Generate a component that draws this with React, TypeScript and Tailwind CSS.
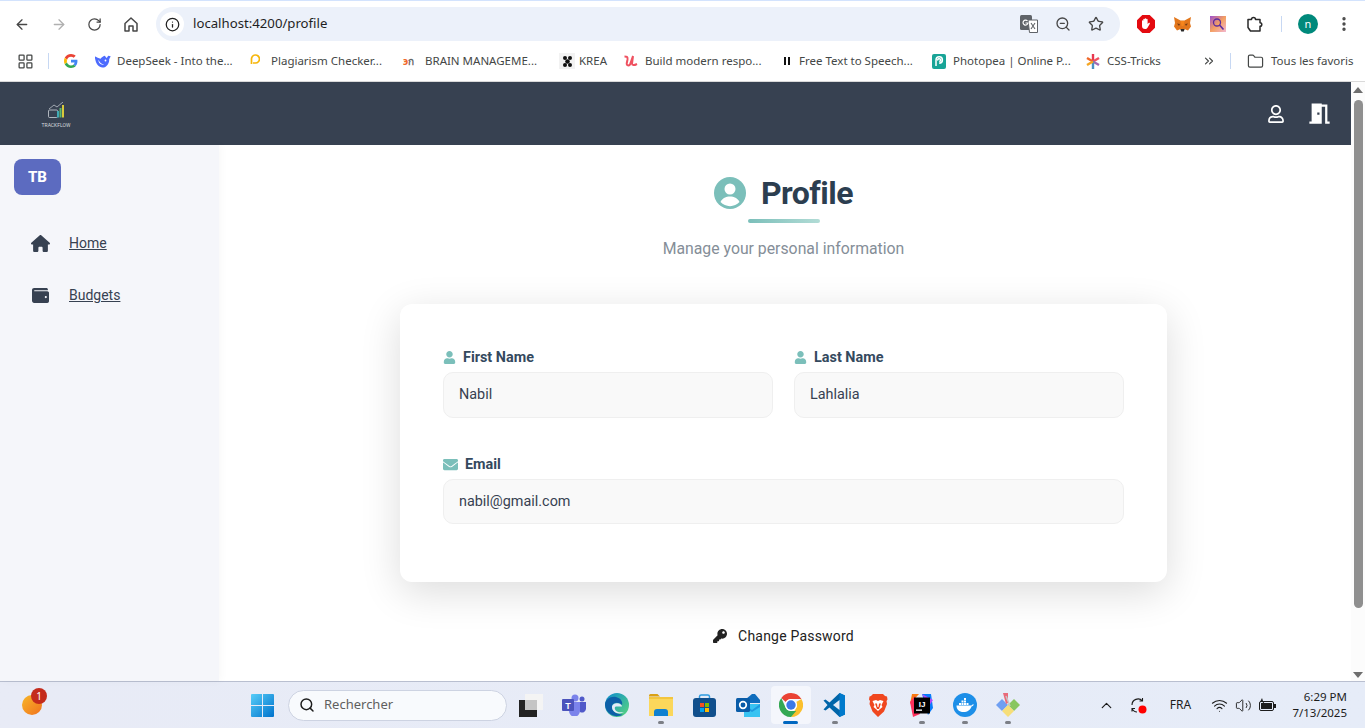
import { ReactNode } from 'react';
import { ArrowLeft, ArrowRight, RotateCw, Info, ZoomOut, Star, LayoutGrid, ChevronsRight, Folder, ChevronUp, Search, EllipsisVertical, Wifi, Volume2 } from 'lucide-react';
import { FaWallet, FaUser, FaEnvelope, FaKey, FaRegUser } from 'react-icons/fa';
import { FaHouse } from 'react-icons/fa6';
import { MdMeetingRoom } from 'react-icons/md';

const GoogleIcon = () => (
  <svg width="14" height="14" viewBox="0 0 48 48">
    <path fill="#EA4335" d="M24 9.500c3.500 0 6.700 1.200 9.200 3.600l6.900-6.900C35.900 2.400 30.500 0 24 0 14.600 0 6.500 5.400 2.600 13.200l8 6.200C12.400 13.700 17.700 9.500 24 9.500z" />
    <path fill="#4285F4" d="M46.100 24.500c0-1.600-.1-3.100-.4-4.500H24v9h12.400c-.5 2.900-2.200 5.300-4.600 7l7.200 5.600c4.200-3.900 7.100-9.700 7.100-17.100z" />
    <path fill="#FBBC05" d="M10.500 28.600c-.5-1.400-.8-3-.8-4.600s.3-3.200.8-4.600l-8-6.200C.9 16.500 0 20.100 0 24s.9 7.500 2.600 10.800l7.900-6.200z" />
    <path fill="#34A853" d="M24 48c6.500 0 11.900-2.100 15.900-5.800l-7.200-5.600c-2.200 1.500-5 2.400-8.700 2.400-6.300 0-11.600-4.200-13.500-9.900l-8 6.200C6.500 42.600 14.600 48 24 48z" />
  </svg>
);

const DeepSeekIcon = () => (
  <svg width="16" height="13" viewBox="0 0 16 13">
    <path fill="#4d6bfe" d="M.3 1.500c1.500 1 3.200 1.700 5.200 2.200C7 2 8.500 1 10 .8c.3 1 .8 1.700 1.700 2.100L13.200.7l2.500.6-1.500 2.900c.2 3.800-2.200 8.300-6.700 8.300-4 0-7.200-4-7.700-11z" />
    <path fill="#fff" d="M3.500 4.800c1 2.800 3 4.300 5.500 4.700-3 .9-5.800-1.500-5.500-4.700z" />
    <circle cx="10.500" cy="5.500" r=".9" fill="#fff" />
  </svg>
);

const PlagiarismIcon = () => (
  <svg width="11" height="14" viewBox="0 0 11 14">
    <path fill="none" stroke="#f6b60b" strokeWidth="1.700" d="M2.500 10V5.500a4 4 0 1 1 4 3.500H4" />
  </svg>
);

const BrainIcon = () => (
  <span className="font-['Noto_Sans',sans-serif] text-[10px] leading-none font-bold tracking-tighter">
    <span className="text-[#f0682a]">э</span>
    <span className="text-[#666]">ก</span>
  </span>
);

const KreaIcon = () => (
  <span className="flex h-4 w-4 items-center justify-center bg-[#f2f2f2]">
    <svg width="9" height="11" viewBox="0 0 9 11" fill="#111">
      <circle cx="2" cy="2" r="2" />
      <circle cx="7" cy="2" r="2" />
      <circle cx="2" cy="9" r="2" />
      <circle cx="7" cy="9" r="2" />
      <circle cx="4.500" cy="5.500" r="2.300" />
    </svg>
  </span>
);

const UdemyIcon = () => (
  <svg width="15" height="12" viewBox="0 0 15 12">
    <path fill="none" stroke="#ef5160" strokeWidth="2" d="M.5 1.500c2 0 3.500 0 3 3l-.8 4c-.3 2 2 2.500 3.300 1l3-8.500-1 7.500c0 2 2 2 5 .5" />
  </svg>
);

const PhotopeaIcon = () => (
  <span className="flex h-[15px] w-[14px] items-center justify-center rounded-[2px] bg-[#18a497]">
    <svg width="10" height="12" viewBox="0 0 10 12">
      <path fill="none" stroke="#fff" strokeWidth="1.500" d="M2 11V5a3.200 3.200 0 1 1 3.200 3.200M3.800 5.500a1.400 1.400 0 1 1 1.400 1" />
    </svg>
  </span>
);

const CssTricksIcon = () => (
  <svg width="14" height="15" viewBox="0 0 14 15" strokeWidth="2.400">
    <path stroke="#f0682a" d="M7 7.500 1 4" />
    <path stroke="#e8384f" d="M7 7.500V0" />
    <path stroke="#ef5160" d="M7 7.500 13 4" />
    <path stroke="#a06ab4" d="M7 7.500 13 11" />
    <path stroke="#4a90c2" d="M7 7.500V15" />
    <path stroke="#f5a623" d="M7 7.500 1 11" />
  </svg>
);

const PauseBarsIcon = () => (
  <svg width="6" height="8" viewBox="0 0 6 8" fill="#111">
    <rect x="0" y="0" width="2" height="8" />
    <rect x="4" y="0" width="2" height="8" />
  </svg>
);

const bookmarks = [
  { label: 'DeepSeek - Into the...', icon: <DeepSeekIcon />, cell: 'w-[154px]', box: 'w-[22px]' },
  { label: 'Plagiarism Checker...', icon: <PlagiarismIcon />, cell: 'w-[154px]', box: 'w-[22px]' },
  { label: 'BRAIN MANAGEME...', icon: <BrainIcon />, cell: 'w-[156px]', box: 'w-[22px]' },
  { label: 'KREA', icon: <KreaIcon />, cell: 'w-[65px]', box: 'w-[20px]' },
  { label: 'Build modern respo...', icon: <UdemyIcon />, cell: 'w-[157px]', box: 'w-[21px]' },
  { label: 'Free Text to Speech...', icon: <PauseBarsIcon />, cell: 'w-[151px]', box: 'w-[18px] pl-[3px]' },
  { label: 'Photopea | Online P...', icon: <PhotopeaIcon />, cell: 'w-[154px]', box: 'w-[21px]' },
  { label: 'CSS-Tricks', icon: <CssTricksIcon />, cell: 'w-[116px]', box: 'w-[21px]' },
];

const TranslateIcon = () => (
  <svg width="18" height="18" viewBox="0 0 18 18">
    <rect x="0" y="0" width="12" height="15" rx="1.500" fill="#5f6368" />
    <path fill="#fff" stroke="#5f6368" d="M8 5h9.500v12.500H9.500z" />
    <path fill="none" stroke="#fff" strokeWidth="1.200" d="M7.500 6A2.500 2.500 0 1 0 8 8H5.500" />
    <path fill="none" stroke="#5f6368" strokeWidth="1.100" d="m11 8 4 6m0-6-4 6" />
  </svg>
);

const AdBlockIcon = () => (
  <svg width="18" height="18" viewBox="0 0 18 18">
    <path fill="#e40a10" d="M5.300 0h7.400L18 5.300v7.400L12.700 18H5.300L0 12.700V5.300z" />
    <path fill="#fff" d="M5 8.500V6c0-1 1.300-1 1.300 0V4.500c0-1 1.400-1 1.400 0V4c0-1 1.500-1 1.500 0v.5c0-1 1.400-1 1.400 0V9l1-1c.8-.7 1.700.1 1.100 1l-2.200 3.700c-.5.800-1.200 1.300-2.300 1.300H8c-2 0-3-1.300-3-3z" />
  </svg>
);

const FoxIcon = () => (
  <svg width="17" height="16" viewBox="0 0 17 16">
    <path fill="#e2761b" d="M0 1l6.500 3.500h4L17 1l-1 6 1 3.500-3 4-3-1.200-2.500 1-2.500-1-3 1.200-3-4L1 7z" />
    <path fill="#763d16" d="M3 7.500l3 .5-1 2zM14 7.500l-3 .5 1 2z" />
    <path fill="#2a2a2a" d="M6.500 13h4l-.7 2.500H7.200z" />
    <path fill="#f6851b" d="M6.500 5h4l-1 5h-2z" />
  </svg>
);

const LensIcon = () => (
  <svg width="16" height="16" viewBox="0 0 16 16">
    <defs>
      <linearGradient id="lensBg" x1="0" y1="0" x2="1" y2="1">
        <stop offset="0" stopColor="#9c4fd0" />
        <stop offset="0.5" stopColor="#f4a062" />
        <stop offset="1" stopColor="#f2b6d0" />
      </linearGradient>
    </defs>
    <rect width="16" height="16" fill="url(#lensBg)" />
    <circle cx="7" cy="6.500" r="3.500" fill="none" stroke="#5a2ca0" strokeWidth="1.300" />
    <path stroke="#5a2ca0" strokeWidth="1.600" d="m9.500 9 4 4.500" />
  </svg>
);

const PuzzleIcon = () => (
  <svg width="16" height="16" viewBox="0 0 16 16" fill="none" stroke="#2a2a2a" strokeWidth="1.500" strokeLinejoin="round">
    <path d="M1 3.500h3.500a2 2 0 0 1 4 0H13v3.200a1.800 1.800 0 0 1 0 3.600V15H3.500l-2.500-3.500z" />
  </svg>
);

const ChromeHomeIcon = () => (
  <svg width="14" height="15" viewBox="0 0 14 15" fill="none" stroke="#474747" strokeWidth="1.500" strokeLinejoin="round">
    <path d="M1 6.500 7 1l6 5.500V14H9V9H5v5H1z" />
  </svg>
);

const WindowsIcon = () => (
  <svg width="23" height="23" viewBox="0 0 23 23">
    <defs>
      <linearGradient id="winBlue" x1="0" y1="0" x2="1" y2="1">
        <stop offset="0" stopColor="#56cdf8" />
        <stop offset="1" stopColor="#0072cc" />
      </linearGradient>
    </defs>
    <path fill="url(#winBlue)" d="M0 1a1 1 0 0 1 1-1h10v11H0zM12 0h10a1 1 0 0 1 1 1v10H12zM0 12h11v11H1a1 1 0 0 1-1-1zM12 12h11v10a1 1 0 0 1-1 1H12z" />
  </svg>
);

const TaskViewIcon = () => (
  <svg width="24" height="23" viewBox="0 0 24 23">
    <rect x="6" y="0" width="18" height="16" fill="#f4f4f4" />
    <rect x="0" y="6" width="18" height="17" fill="#222" />
    <rect x="6" y="6" width="12" height="10" fill="#c4c4c4" />
  </svg>
);

const TeamsIcon = () => (
  <svg width="24" height="22" viewBox="0 0 24 22">
    <circle cx="13" cy="4" r="3.500" fill="#7b83eb" />
    <circle cx="20" cy="5" r="2.500" fill="#5059c9" />
    <path fill="#5059c9" d="M16 8h8v7a4 4 0 0 1-6 3z" />
    <path fill="#7b83eb" d="M7 8h11v9a5 5 0 0 1-11 0z" />
    <rect x="0" y="5" width="12" height="12" rx="1" fill="#4b53bc" />
    <text x="6" y="14.500" textAnchor="middle" fontSize="9" fontWeight="700" fill="#fff" fontFamily="Liberation Sans, sans-serif">T</text>
  </svg>
);

const EdgeIcon = () => (
  <svg width="24" height="24" viewBox="0 0 24 24">
    <defs>
      <linearGradient id="edgeTop" x1="0" y1="0" x2="1" y2="1">
        <stop offset="0" stopColor="#0c8bd0" />
        <stop offset="1" stopColor="#5bd87a" />
      </linearGradient>
    </defs>
    <circle cx="12" cy="12" r="12" fill="url(#edgeTop)" />
    <path fill="#0d5fa8" d="M0 12C0 6 6 3 11 4c4 1 7 4 6 8-3-3-9-3-10 1-1 5 5 9 11 8.500A12 12 0 0 1 0 12z" />
    <path fill="#e4ebf7" d="M7 14c0-3 4-4.500 7-3.500 1.500.5 3 1.500 3 3H11c-1.500 0-2 3 1 5 2 1 4.500 1 7 .5-4 3-12 1-12-5z" />
  </svg>
);

const FolderIcon = () => (
  <svg width="24" height="22" viewBox="0 0 24 22">
    <path fill="#d9a016" d="M0 1.500A1.500 1.500 0 0 1 1.500 0h7L11 2.500H0z" />
    <path fill="#fbd75b" d="M0 4h24v18H0z" />
    <path fill="#f3c53e" d="M0 3h24v2H0z" />
    <path fill="#0f80d0" d="M5 18a3 3 0 0 1 3-3h8a3 3 0 0 1 3 3v4H5z" />
  </svg>
);

const StoreIcon = () => (
  <svg width="23" height="23" viewBox="0 0 23 23">
    <path fill="none" stroke="#2e9be0" strokeWidth="1.500" d="M6.500 5V2.500A1.700 1.700 0 0 1 8.200 1h6.600a1.700 1.700 0 0 1 1.700 1.500V5" />
    <rect y="4" width="23" height="19" rx="3" fill="#114f8c" />
    <rect x="7" y="9" width="4" height="4" fill="#f25022" />
    <rect x="12" y="9" width="4" height="4" fill="#7fba00" />
    <rect x="7" y="14" width="4" height="4" fill="#00a4ef" />
    <rect x="12" y="14" width="4" height="4" fill="#ffb900" />
  </svg>
);

const OutlookIcon = () => (
  <svg width="24" height="23" viewBox="0 0 24 23">
    <path fill="#0f6cbd" d="M10 5l6-5h3l5 6v3H10z" />
    <path fill="#38c3f2" d="M8 10h16v13H8z" />
    <path fill="#1e9ae0" d="M8 10l8 6 8-6v3l-8 5-8-5z" />
    <rect x="0" y="4" width="14" height="14" rx="1.500" fill="#0a5ca8" />
    <circle cx="7" cy="11" r="3.300" fill="none" stroke="#fff" strokeWidth="1.700" />
  </svg>
);

const ChromeLogo = () => (
  <svg width="24" height="24" viewBox="0 0 24 24">
    <path fill="#ea4335" d="M12 0a12 12 0 0 1 10.400 6H12a6 6 0 0 0-5.200 3L2.300 4.900A12 12 0 0 1 12 0z" />
    <path fill="#fbc02d" d="M22.400 6A12 12 0 0 1 12 24l5.200-9a6 6 0 0 0 0-6z" />
    <path fill="#34a853" d="M2.300 4.900 6.800 15a6 6 0 0 0 5.200 3h5.200l-5.200 6A12 12 0 0 1 2.300 4.900z" />
    <circle cx="12" cy="12" r="6" fill="#fff" />
    <circle cx="12" cy="12" r="4.700" fill="#3b78e7" />
  </svg>
);

const VsCodeIcon = () => (
  <svg width="24" height="24" viewBox="0 0 24 24">
    <path fill="#0065a9" d="M23 2.500 17.500 0 7.500 9.500l-4-3L1.500 7.500 5.500 12l-4 4.500 2 1 4-3 10 9.500 5.500-2.500z" />
    <path fill="#007acc" d="M17.500 0 23 2.500v19L17.500 24z" />
    <path fill="#e4ebf7" d="M17.500 7v10L11 12z" />
  </svg>
);

const BraveIcon = () => (
  <svg width="20" height="23" viewBox="0 0 20 23">
    <path fill="#f0471f" d="M5 0h10l2 2 2 .5.500 3-1 1.500.5 3-3 7.500L10 23l-5.500-5.500-3-7.500.5-3-1-1.500.5-3L3 2z" />
    <path fill="#fff" d="M4.500 7 8 6l2 1 2-1 3.500 1-2 4 1 2-3 2.500L10 17l-1.500-1.500-3-2.500 1-2z" />
    <path fill="#f0471f" d="M7 9.500h2L9.500 13H10.500L11 9.500h2L11 15H9z" />
  </svg>
);

const IdeaIcon = () => (
  <svg width="23" height="23" viewBox="0 0 23 23">
    <path fill="#f97a12" d="M2 0h7L0 10z" />
    <path fill="#fe315d" d="M0 8l5-6 5 18-7 3z" />
    <path fill="#087cfa" d="M12 0h9l2 14-5 7z" />
    <path fill="#b74af7" d="M12 0 23 6l-4 6z" />
    <rect x="4" y="3.500" width="16" height="16" fill="#000" />
    <text x="12" y="12.500" textAnchor="middle" fontSize="8" fontWeight="700" fill="#fff" fontFamily="Liberation Sans, sans-serif">IJ</text>
    <rect x="6" y="15.500" width="6" height="1.300" fill="#fff" />
  </svg>
);

const DockerIcon = () => (
  <svg width="24" height="24" viewBox="0 0 24 24">
    <circle cx="12" cy="12" r="12" fill="#1d8fe8" />
    <path fill="#fff" d="M3.500 12.500h14c1 0 1.800-.5 2.300-1.300l1 .4c-.4 1-1.200 1.700-2.300 1.900-1 3.500-4 5.500-8 5.500-4.500 0-7-2.500-7-6.500z" />
    <path fill="#fff" d="M6 10h2v2H6zM8.500 10h2v2h-2zM11 10h2v2h-2zM13.500 10h2v2h-2zM8.500 7.500h2v2h-2zM11 7.500h2v2h-2zM11 5h2v2h-2z" />
  </svg>
);

const GitKrakenIcon = () => (
  <svg width="24" height="24" viewBox="0 0 24 24">
    <path fill="#6f9ff2" d="M0 12 6 6l6 6-6 6z" />
    <path fill="#e96a7a" d="M7 0h5v10l-2 1z" />
    <path fill="#88c65f" d="M12 12l6-6 6 6-6 6z" />
    <path fill="#f6de7a" d="M6 18l6-6 6 6-6 6z" />
    <path stroke="#c7c7c7" strokeWidth="1.500" d="M10 3 14 13" />
  </svg>
);

const SyncIcon = () => (
  <svg width="17" height="17" viewBox="0 0 17 17">
    <g fill="none" stroke="#1c1c1c" strokeWidth="1.100">
      <path d="M2 8a6 6 0 0 1 10.500-4M12.500 1v3h-3" />
      <path d="M2 14.500v-3h3M2 11.500c1 2 3 3.500 5 3.500" />
    </g>
    <circle cx="12.500" cy="12.500" r="4" fill="#f00" />
  </svg>
);

const BatteryIcon = () => (
  <svg width="17" height="14" viewBox="0 0 17 14">
    <rect x="0.500" y="3.500" width="14" height="9" rx="1.500" fill="none" stroke="#1c1c1c" />
    <rect x="2" y="5" width="11" height="6" fill="#1c1c1c" />
    <rect x="15" y="6" width="2" height="4" fill="#1c1c1c" />
    <path fill="#1c1c1c" d="M3 0 1 4h3l-1 3 3-4H4z" />
  </svg>
);

const taskbarApps = [
  { id: 'task', icon: <TaskViewIcon /> },
  { id: 'teams', icon: <TeamsIcon /> },
  { id: 'edge', icon: <EdgeIcon /> },
  { id: 'folder', icon: <FolderIcon />, dot: true },
  { id: 'store', icon: <StoreIcon /> },
  { id: 'outlook', icon: <OutlookIcon /> },
  { id: 'chrome', icon: <ChromeLogo />, active: true },
  { id: 'vscode', icon: <VsCodeIcon />, dot: true },
  { id: 'brave', icon: <BraveIcon /> },
  { id: 'idea', icon: <IdeaIcon />, dot: true },
  { id: 'docker', icon: <DockerIcon />, dot: true },
  { id: 'git', icon: <GitKrakenIcon />, dot: true },
];

const Field = ({ icon, label, value, inputHeight }: { icon: ReactNode; label: string; value: string; inputHeight: string }) => (
  <div className="flex w-full flex-col">
    <div className="flex h-5 items-center gap-[7px] pt-px text-[14.400px] font-bold text-[#34495e]">
      {icon}
      <span>{label}</span>
    </div>
    <div className={`mt-[5px] flex items-center rounded-[10px] border border-[#efefef] bg-[#f9f9f9] pl-[15px] text-[14.400px] text-[#374151] ${inputHeight}`}>
      {value}
    </div>
  </div>
);

const App = () => {
  return (
    <div className="flex h-[728px] w-[1365px] flex-col overflow-hidden bg-white font-['Roboto',sans-serif]">
      {/* Browser chrome */}
      <div className="h-[82px] shrink-0 border-b border-[#d9d9d9] bg-white font-['Noto_Sans',sans-serif]">
        <div className="h-px bg-[#d3e3fd]" />
        <div className="mt-[3px] flex h-10 items-center text-[#474747]">
          <div className="ml-[14px] flex w-[16px] justify-center">
            <ArrowLeft size={17} strokeWidth={2} />
          </div>
          <div className="ml-[21px] flex w-[16px] justify-center text-[#b0b0b0]">
            <ArrowRight size={17} strokeWidth={2} />
          </div>
          <div className="ml-[19px] flex w-[16px] justify-center">
            <RotateCw size={15} strokeWidth={2} />
          </div>
          <div className="ml-[21px] flex w-[16px] justify-center">
            <ChromeHomeIcon />
          </div>
          <div className="ml-[17px] flex h-[34px] w-[964px] items-center rounded-full bg-[#ecf1fa] pl-[4px]">
            <span className="flex h-6 w-6 items-center justify-center rounded-full bg-white text-[#1f1f1f]">
              <Info size={15} strokeWidth={2} />
            </span>
            <span className="ml-[9px] text-[13.200px] text-[#1f1f1f]">localhost:4200/profile</span>
            <div className="ml-auto mr-[16px] flex items-center gap-[17px] text-[#474747]">
              <TranslateIcon />
              <ZoomOut size={16} strokeWidth={2} />
              <Star size={16} strokeWidth={2} />
            </div>
          </div>
          <div className="ml-[17px] flex items-center gap-[19px]">
            <AdBlockIcon />
            <FoxIcon />
            <LensIcon />
            <span className="ml-[2px]">
              <PuzzleIcon />
            </span>
          </div>
          <div className="ml-[18px] h-[16px] w-px bg-[#c7d8f3]" />
          <span className="ml-[16px] flex h-5 w-5 items-center justify-center rounded-full bg-[#00897b] text-[11px] text-white">n</span>
          <EllipsisVertical className="ml-[17px]" size={18} strokeWidth={2.500} />
        </div>
        <div className="flex h-[34px] items-center text-[11.500px] text-[#444746]">
          <LayoutGrid className="ml-[17px]" size={17} strokeWidth={1.800} />
          <div className="ml-[14px] h-[16px] w-px bg-[#c7d8f3]" />
          <div className="ml-[15px] flex w-[31px]">
            <GoogleIcon />
          </div>
          {bookmarks.map((b) => (
            <div key={b.label} className={`flex items-center ${b.cell}`}>
              <span className={`flex shrink-0 items-center ${b.box}`}>{b.icon}</span>
              <span className="whitespace-nowrap">{b.label}</span>
            </div>
          ))}
          <ChevronsRight size={14} strokeWidth={2} />
          <div className="ml-[14px] h-[16px] w-px bg-[#c7d8f3]" />
          <Folder className="ml-[16px]" size={17} strokeWidth={1.700} />
          <span className="ml-[7px] whitespace-nowrap">Tous les favoris</span>
        </div>
      </div>

      {/* App area */}
      <div className="flex min-h-0 flex-1">
        <div className="flex min-w-0 flex-1 flex-col">
          <header className="flex h-[63px] shrink-0 items-center bg-[#374151] pr-[18px]">
            <div className="ml-[41px] flex w-[30px] flex-col items-center pt-[2px]">
              <svg width="17" height="17" viewBox="0 0 17 17">
                <rect x="0.500" y="8" width="9" height="7.500" rx="1" fill="none" stroke="#cfd4da" strokeWidth="0.800" />
                <path fill="none" stroke="#cfd4da" strokeWidth="0.700" d="M1 7l5-4 3 2 6-5" />
                <rect x="9" y="9" width="2" height="6.500" fill="#3fa9b5" />
                <rect x="11.500" y="6" width="2" height="9.500" fill="#59b870" />
                <rect x="14" y="3" width="2" height="12.500" fill="#d7c93b" />
              </svg>
              <span className="mt-[3px] text-[5px] leading-[6px] whitespace-nowrap text-[#d6d9de]">TRACKFLOW</span>
            </div>
            <FaRegUser className="ml-auto text-white" size={18} />
            <MdMeetingRoom className="ml-[21px] text-white" size={27} />
          </header>

          <div className="flex min-h-0 flex-1">
            <aside className="z-10 w-[219px] shrink-0 bg-[#f5f6fa] pt-[14px] pl-[14px] shadow-[2px_0_8px_rgba(0,0,0,0.03)]">
              <div className="flex h-9 w-[47px] items-center justify-center rounded-lg bg-[#5c6bc0] text-[15px] font-extrabold text-white">
                TB
              </div>
              <nav className="mt-[36px] flex flex-col gap-[28px] pl-[17px] text-sm text-[#374151]">
                <a className="flex h-6 items-center underline" href="#home">
                  <span className="flex w-[38px]">
                    <FaHouse size={19} />
                  </span>
                  Home
                </a>
                <a className="flex h-6 items-center underline" href="#budgets">
                  <span className="flex w-[38px] pl-px">
                    <FaWallet size={17} />
                  </span>
                  Budgets
                </a>
              </nav>
            </aside>

            <main className="flex flex-1 flex-col items-center pt-[30px] pr-[3px]">
              <div className="flex h-9 items-center gap-[15px]">
                <span className="flex h-8 w-8 items-end justify-center overflow-hidden rounded-full bg-[#7bbfba]">
                  <svg width="32" height="32" viewBox="0 0 32 32" fill="#fff">
                    <circle cx="16" cy="12" r="5.500" />
                    <path d="M6.500 25c2-4 5.500-5.500 9.500-5.500s7.500 1.500 9.500 5.500a13 13 0 0 1-19 0z" />
                  </svg>
                </span>
                <h1 className="text-[32px] leading-9 font-bold tracking-[-0.5px] text-[#2c3e50]">Profile</h1>
              </div>
              <div className="mt-[8px] h-1 w-[72px] rounded-full bg-gradient-to-r from-[#7bbfba] to-[#b2dcd6]" />
              <p className="mt-[14px] text-[15.800px] leading-6 text-[#858e98]">Manage your personal information</p>

              <div className="mt-[43px] w-[767px] rounded-xl bg-white px-[43px] pt-[43px] pb-[58px] shadow-[0_10px_40px_rgba(0,0,0,0.14)]">
                <div className="flex gap-[21px]">
                  <Field icon={<FaUser className="text-[#7bbfba]" size={13} />} label="First Name" value="Nabil" inputHeight="h-[46px]" />
                  <Field icon={<FaUser className="text-[#7bbfba]" size={13} />} label="Last Name" value="Lahlalia" inputHeight="h-[46px]" />
                </div>
                <div className="mt-[36px]">
                  <Field icon={<FaEnvelope className="text-[#7bbfba]" size={15} />} label="Email" value="nabil@gmail.com" inputHeight="h-[45px]" />
                </div>
              </div>

              <button className="mt-[44px] flex h-5 items-center gap-[11px] text-sm tracking-[0.2px] text-[#222222]">
                <FaKey size={14} />
                Change Password
              </button>
            </main>
          </div>
        </div>

        {/* Scrollbar */}
        <div className="flex w-[14px] shrink-0 flex-col items-center bg-[#fcfcfc] pt-[5px]">
          <span className="h-0 w-0 border-x-[5px] border-b-[6px] border-x-transparent border-b-[#6e6e6e]" />
          <span className="mt-[7px] h-[508px] w-[9px] rounded-full bg-[#8f8f8f]" />
          <span className="mt-auto mb-[3px] h-0 w-0 border-x-[5px] border-t-[6px] border-x-transparent border-t-[#6e6e6e]" />
        </div>
      </div>

      {/* Windows taskbar */}
      <footer className="flex h-[47px] shrink-0 items-center border-t border-[#b9bfd0] bg-gradient-to-r from-[#e8ebf6] to-[#e6ecf8] font-['Noto_Sans',sans-serif] text-[#1c1c1c]">
        <div className="relative ml-[22px] h-5 w-5 rounded-full bg-gradient-to-br from-[#f6b72a] to-[#f0701d]">
          <span className="absolute -top-[7px] left-[9px] flex h-4 w-4 items-center justify-center rounded-full bg-[#c42b1c] text-[10px] leading-none text-white">1</span>
        </div>
        <div className="ml-[209px]">
          <WindowsIcon />
        </div>
        <div className="ml-[14px] flex h-[31px] w-[219px] items-center rounded-full border border-[#cdd3e2] bg-[#f8fafd] pl-[10px]">
          <Search size={16} strokeWidth={2.200} />
          <span className="ml-[9px] text-[13px] text-[#5f5f5f]">Rechercher</span>
        </div>
        <div className="ml-[2px] flex">
          {taskbarApps.map((app) => (
            <div key={app.id} className="relative flex h-[38px] w-[43.400px] items-center justify-center">
              {app.active && <span className="absolute inset-y-0 inset-x-[2px] rounded-[4px] bg-[#f4f6fc]" />}
              <span className="relative flex">{app.icon}</span>
              {app.dot && <span className="absolute bottom-0 left-[19px] h-[3px] w-[6px] rounded-full bg-[#7c7f86]" />}
              {app.active && <span className="absolute bottom-0 left-[14px] h-[3px] w-[15px] rounded-full bg-[#0067c0]" />}
            </div>
          ))}
        </div>
        <ChevronUp className="ml-[68px]" size={17} strokeWidth={1.700} />
        <span className="ml-[15px] flex">
          <SyncIcon />
        </span>
        <span className="ml-[23px] text-[12px]">FRA</span>
        <Wifi className="ml-[20px]" size={17} strokeWidth={1.500} />
        <Volume2 className="ml-[7px]" size={17} strokeWidth={1.300} />
        <span className="ml-[7px] flex">
          <BatteryIcon />
        </span>
        <div className="ml-auto mr-[18px] flex flex-col items-end text-[11.500px] leading-[16px]">
          <span>6:29 PM</span>
          <span>7/13/2025</span>
        </div>
      </footer>
    </div>
  );
};

export default App;
